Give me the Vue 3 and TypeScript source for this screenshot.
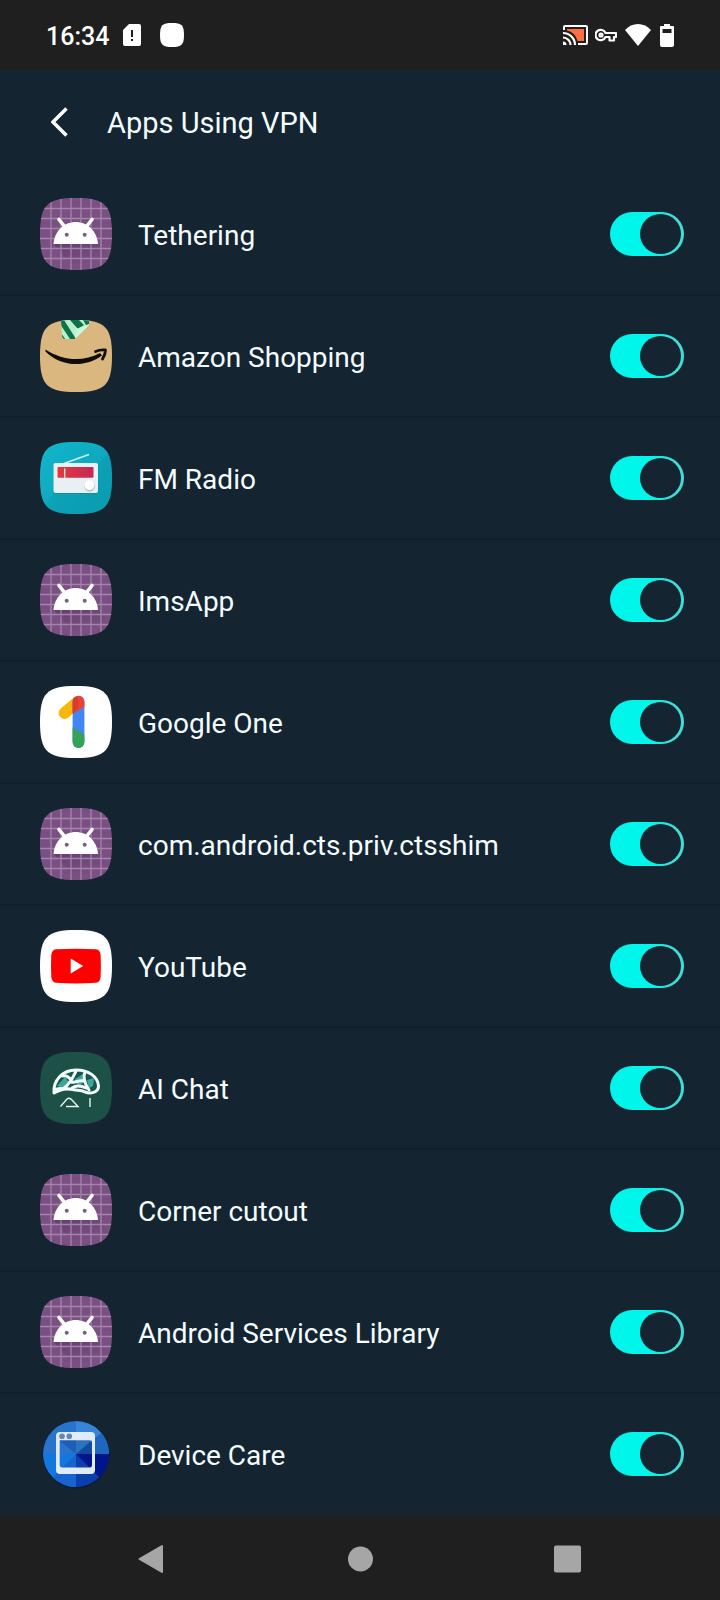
<script setup lang="ts">
import { ref } from 'vue'

type IconKind = 'android' | 'amazon' | 'radio' | 'one' | 'youtube' | 'ai' | 'care'

interface AppEntry {
  id: string
  name: string
  icon: IconKind
  enabled: boolean
}

const apps = ref<AppEntry[]>([
  { id: 'tethering', name: 'Tethering', icon: 'android', enabled: true },
  { id: 'amazon', name: 'Amazon Shopping', icon: 'amazon', enabled: true },
  { id: 'radio', name: 'FM Radio', icon: 'radio', enabled: true },
  { id: 'ims', name: 'ImsApp', icon: 'android', enabled: true },
  { id: 'one', name: 'Google One', icon: 'one', enabled: true },
  { id: 'ctsshim', name: 'com.android.cts.priv.ctsshim', icon: 'android', enabled: true },
  { id: 'youtube', name: 'YouTube', icon: 'youtube', enabled: true },
  { id: 'aichat', name: 'AI Chat', icon: 'ai', enabled: true },
  { id: 'cutout', name: 'Corner cutout', icon: 'android', enabled: true },
  { id: 'services', name: 'Android Services Library', icon: 'android', enabled: true },
  { id: 'care', name: 'Device Care', icon: 'care', enabled: true },
])

const squircle = 'M36 0C65 0 72 7 72 36S65 72 36 72 0 65 0 36 7 0 36 0Z'
const gridLines = [11, 21, 31, 41, 51, 61]
</script>

<template>
  <div class="screen">
    <svg class="defs" width="0" height="0" aria-hidden="true">
      <defs>
        <clipPath id="squircle"><path :d="squircle" /></clipPath>
        <clipPath id="tape"><path d="M21 0H49V5L35 19H25Q22 19 22 15Z" /></clipPath>
        <clipPath id="numeral"><rect x="32.600" y="9.800" width="11.800" height="52.200" rx="5.900" /></clipPath>
        <clipPath id="disc"><circle cx="36" cy="36" r="33" /></clipPath>
        <linearGradient id="radio-bg" x1="0" y1="0" x2="1" y2="1">
          <stop offset="0" stop-color="#13b5cb" />
          <stop offset="1" stop-color="#0a9fb4" />
        </linearGradient>
        <linearGradient id="radio-dial" x1="0" y1="0" x2="1" y2="0">
          <stop offset="0" stop-color="#e23a3c" />
          <stop offset="1" stop-color="#c22a55" />
        </linearGradient>
        <linearGradient id="head-shadow" x1="0" y1="0" x2="0.600" y2="1">
          <stop offset="0" stop-color="#4a2853" stop-opacity="0.450" />
          <stop offset="0.800" stop-color="#4a2853" stop-opacity="0" />
        </linearGradient>
      </defs>
    </svg>

    <div class="status">
      <div class="status-group">
        <time class="clock">16:34</time>
        <svg class="sim" width="20" height="24" viewBox="0 0 20 24" aria-hidden="true">
          <path fill="#fff" d="M7 1H17Q19 1 19 3V21Q19 23 17 23H3Q1 23 1 21V7Z" />
          <path fill="#1f1f1f" d="M9 7H11V14H9ZM9 16H11V18H9Z" />
        </svg>
        <svg width="24" height="24" viewBox="0 0 72 72" aria-hidden="true">
          <path fill="#fff" :d="squircle" />
        </svg>
      </div>
      <div class="status-group right">
        <svg width="25" height="22" viewBox="0 0 25 22" fill="none" aria-hidden="true">
          <path fill="#ff6e40" d="M4 5H21V17H14.500Q12 8 4 6.500Z" />
          <path stroke="#fff" stroke-width="2" d="M1 6V3Q1 2 2 2H23Q24 2 24 3V19Q24 20 23 20H15" />
          <path stroke="#fff" stroke-width="2.200" d="M0 9A12 12 0 0 1 12 21M0 13.500A7.500 7.500 0 0 1 7.500 21" />
          <path fill="#fff" d="M0 17.500A3.500 3.500 0 0 1 3.500 21H0Z" />
        </svg>
        <svg class="key" width="22" height="14" viewBox="0 0 22 14" fill="none" stroke="#fff" stroke-width="2.200" aria-hidden="true">
          <path stroke-linejoin="round" d="M10.500 5H21V9H19V12.500H14.500V9H10.500A5.200 5.200 0 1 1 10.500 5Z" />
          <circle cx="6" cy="7" r="1.500" />
        </svg>
        <svg width="26" height="22" viewBox="0 0 26 22" aria-hidden="true">
          <path fill="#fff" d="M0 6Q5.500 0 13 0T26 6L13 22Z" />
        </svg>
        <svg class="battery" width="14" height="24" viewBox="0 0 14 24" aria-hidden="true">
          <path fill="#fff" fill-rule="evenodd" d="M4 1H10V3H13Q14 3 14 4V22Q14 24 12 24H2Q0 24 0 22V4Q0 3 1 3H4ZM2.500 6V10H11.500V6Z" />
        </svg>
      </div>
    </div>

    <header class="header">
      <button class="back" type="button" aria-label="Back">
        <svg width="18" height="30" viewBox="0 0 18 30" aria-hidden="true">
          <path fill="none" stroke="#fff" stroke-width="3.500" d="M15.500 1.500L2 15L15.500 28.500" />
        </svg>
      </button>
      <h1 class="title">Apps Using VPN</h1>
    </header>

    <main class="list">
      <label v-for="app in apps" :key="app.id" class="row">
        <svg class="icon" viewBox="0 0 72 72" aria-hidden="true">
          <g v-if="app.icon === 'android'" clip-path="url(#squircle)">
            <rect width="72" height="72" fill="#7a5083" />
            <path d="M14 46H58L72 60V72H36Z" fill="url(#head-shadow)" />
            <g stroke="#a584ac" stroke-width="1.300">
              <path v-for="p in gridLines" :key="p" :d="`M${p} 0V72M0 ${p - 0.5}H72`" />
            </g>
            <path d="M19 21.500L25 29M52 21.500L46 29" stroke="#fff" stroke-width="3.600" stroke-linecap="round" />
            <path d="M13.500 46C14.500 33 24 24 35.700 24S57 33 58 46Z" fill="#fff" />
            <circle cx="26.700" cy="36.800" r="2" fill="#76607b" />
            <circle cx="44.700" cy="36.800" r="2" fill="#76607b" />
          </g>

          <g v-else-if="app.icon === 'amazon'" clip-path="url(#squircle)">
            <rect width="72" height="72" fill="#dab77e" />
            <g clip-path="url(#tape)">
              <rect x="20" width="30" height="20" fill="#b9f0cc" />
              <path d="M20 4L30 19H36L24 0H20ZM30 0L38 9L44 5L39 0ZM43 0L46 5H49V0ZM20 12L26 20H20Z" fill="#0b7249" />
              <path d="M35 19L36 9L49 4V6Z" fill="#cbf7dc" />
            </g>
            <path d="M5.500 29.500C23 41 43 42 60 33L62 35.500C45 48 21 47 5.500 31.500Z" fill="#100d09" />
            <path d="M55.500 31.500Q60 29.500 65.500 30Q65.500 34 62.500 39" fill="none" stroke="#100d09" stroke-width="2.800" stroke-linecap="round" stroke-linejoin="round" />
          </g>

          <g v-else-if="app.icon === 'radio'" clip-path="url(#squircle)">
            <rect width="72" height="72" fill="url(#radio-bg)" />
            <path d="M0 72L14 50L58 22L72 8V72Z" fill="#078ca1" opacity="0.250" />
            <path d="M24 21.500L49 12.500" stroke="#c9f2f7" stroke-width="1.600" />
            <rect x="13.500" y="22" width="45" height="30" rx="2" fill="#087f92" opacity="0.500" />
            <rect x="13.500" y="21" width="44.500" height="30" rx="2" fill="#e9f0f5" />
            <rect x="17.500" y="25" width="36" height="10.800" rx="1" fill="url(#radio-dial)" />
            <path d="M24.700 26.500V35.800" stroke="#f5dce0" stroke-width="1.400" />
            <circle cx="49.500" cy="44.200" r="5.400" fill="#b5bcc2" />
            <circle cx="49.300" cy="43.200" r="5" fill="#fff" />
          </g>

          <g v-else-if="app.icon === 'one'">
            <path :d="squircle" fill="#fff" />
            <path d="M24.500 27L37 16.500" stroke="#fbb60a" stroke-width="11.800" stroke-linecap="round" />
            <g clip-path="url(#numeral)">
              <rect x="32" y="9" width="13" height="54" fill="#4285f4" />
              <path d="M32 9H45V20.500L32 28Z" fill="#e94335" />
              <path d="M32 41L45 49V63H32Z" fill="#34a355" />
            </g>
            <path d="M32.600 15V27L38 23V11Q33 11 32.600 15Z" fill="#b8321d" opacity="0.350" />
          </g>

          <g v-else-if="app.icon === 'youtube'">
            <path :d="squircle" fill="#fff" />
            <path d="M16 19.300Q36 18 56 19.300Q60.300 20 60.600 25Q61.200 36 60.600 47Q60.300 52 56 52.800Q36 54 16 52.800Q11.700 52 11.300 47Q10.700 36 11.300 25Q11.700 20 16 19.300Z" fill="#f00" />
            <path d="M30.700 28.500V43.500L43.200 36Z" fill="#fff" />
          </g>

          <g v-else-if="app.icon === 'ai'">
            <path :d="squircle" fill="#1d5046" />
            <path d="M14 41C13 29 22 18 36 18C49 18 58 25 58.500 34C58.500 40 53 42 48 40.500C43 38 38 39 33 38C26 37 20 38 14 41Z" fill="#1a554c" />
            <path d="M17 34L25 25L29 30L23 36ZM35 27L43 22L44 30L38 35ZM47 28L54 26L53 34L49 36Z" fill="#3fa598" />
            <g fill="none" stroke="#f0fffb" stroke-width="3" stroke-linejoin="round" stroke-linecap="round">
              <path d="M14 41C13 29 22 18 36 18C49 18 58 25 58.500 34C58.500 41 50 42 45 40C40 37 37 39 33 37.500C26 36 20 37 14 41Z" />
              <path d="M36 19C33 25 31 31 24 36M22 24C26 23 29 25 31 28M31 30C36 31 38 28 44 29M45 20C43 24 44 31 49 38M32 36C36 33 42 34 46 36" />
            </g>
            <path d="M14 42V36L20 35L29 36L22 39Z" fill="#f0fffb" />
            <path d="M20.500 54.500L27 47Q29.500 45 32 48L38 54.500H26M50 46V55" fill="none" stroke="#e4f5ef" stroke-width="1.400" />
          </g>

          <g v-else>
            <circle cx="36" cy="37" r="33.500" fill="#0b1c33" />
            <g clip-path="url(#disc)">
              <path d="M0 0H36V36H0Z" fill="#2873cd" />
              <path d="M36 0H72V36H36Z" fill="#3884d6" />
              <path d="M72 6V36H36Z" fill="#1f66c0" />
              <path d="M0 36H36V72H0Z" fill="#1278e0" />
              <path d="M36 36V72H0Z" fill="#1763cf" />
              <path d="M36 36H72V72H36Z" fill="#0a3fac" />
              <path d="M36 36H72V72Z" fill="#00158c" />
            </g>
            <path d="M19 22H36V36Z" fill="#1c5fb4" />
            <path d="M36 22H52L36 36Z" fill="#2c72bd" />
            <path d="M52 22V36H36Z" fill="#114b9f" />
            <path fill-rule="evenodd" d="M20 14H51Q55 14 55 18V52Q55 56 51 56H20Q16 56 16 52V18Q16 14 20 14ZM19.700 22.300V47Q19.700 49.500 22 49.500H50Q52 49.500 52 47V24Q52 22.300 50 22.300Z" fill="#e1ebf8" />
            <circle cx="22" cy="18.300" r="2.800" fill="#6089b8" />
            <circle cx="29.300" cy="18.300" r="2.800" fill="#6089b8" />
          </g>
        </svg>
        <span class="name">{{ app.name }}</span>
        <input v-model="app.enabled" class="toggle" type="checkbox" role="switch" />
      </label>
    </main>

    <nav class="nav" aria-label="System navigation">
      <button type="button" aria-label="Back">
        <svg width="32" height="32" viewBox="0 0 32 32" aria-hidden="true">
          <path fill="#a6a6a6" stroke="#a6a6a6" stroke-width="2" stroke-linejoin="round" d="M3.500 17L26 4V30Z" />
        </svg>
      </button>
      <button type="button" aria-label="Home">
        <svg width="32" height="32" viewBox="0 0 32 32" aria-hidden="true">
          <circle cx="16.500" cy="17" r="12.500" fill="#a6a6a6" />
        </svg>
      </button>
      <button type="button" aria-label="Recent apps">
        <svg width="32" height="32" viewBox="0 0 32 32" aria-hidden="true">
          <rect x="2" y="3.500" width="27" height="27" rx="2" fill="#a6a6a6" />
        </svg>
      </button>
    </nav>
  </div>
</template>

<style>
body {
  margin: 0;
  background: #142431;
}
</style>

<style scoped>
.screen {
  display: flex;
  flex-direction: column;
  min-height: 100vh;
  background: #142431;
  color: #f4fdff;
  font-family: Roboto, "Liberation Sans", sans-serif;
}

.screen * {
  box-sizing: border-box;
}

.screen svg {
  display: block;
  flex: none;
}

.screen .defs {
  position: absolute;
}

.status {
  display: flex;
  align-items: center;
  justify-content: space-between;
  height: 70px;
  padding: 0 46px;
  background: #1f1f1f;
  color: #fff;
}

.status-group {
  display: flex;
  align-items: center;
}

.clock {
  margin-right: 13px;
  padding-top: 4px;
  font-size: 25px;
  font-weight: 500;
  line-height: 32px;
}

.sim {
  margin-right: 18px;
}

.key {
  margin: 0 8px 0 7px;
}

.battery {
  margin-left: 9px;
}

.header {
  display: flex;
  align-items: center;
  height: 104px;
  padding: 0 36px;
}

.back {
  display: grid;
  place-items: center;
  width: 48px;
  height: 48px;
  padding: 0;
  border: 0;
  background: none;
}

.title {
  margin: 0 0 0 23px;
  padding-top: 2px;
  font-size: 29px;
  font-weight: 400;
  line-height: 36px;
}

.list {
  flex: 1;
}

.row {
  display: flex;
  align-items: center;
  height: 122px;
  padding: 0 36px 0 40px;
  border-bottom: 2px solid #12202c;
}

.row:last-child {
  height: 121px;
  border-bottom-width: 1px;
  border-bottom-color: transparent;
}

.icon {
  width: 72px;
  height: 72px;
}

.name {
  flex: 1;
  margin-left: 26px;
  padding-top: 4px;
  font-size: 28px;
  line-height: 36px;
}

.toggle {
  display: flex;
  align-items: center;
  width: 74px;
  height: 44px;
  margin: 0;
  padding: 0 3px;
  border-radius: 22px;
  appearance: none;
  background: #37505c;
}

.toggle::before {
  content: "";
  width: 41px;
  height: 40px;
  border-radius: 50%;
  background: #142431;
}

.toggle:checked {
  justify-content: flex-end;
  background: linear-gradient(90deg, #00f5eb 60%, #40dcd6 85%);
}

.nav {
  display: grid;
  grid-template-columns: repeat(3, 1fr);
  height: 85px;
  padding: 0 48px;
  background: #1f1f1f;
}

.nav button {
  display: grid;
  place-items: center;
  padding: 0;
  border: 0;
  background: none;
}
</style>
